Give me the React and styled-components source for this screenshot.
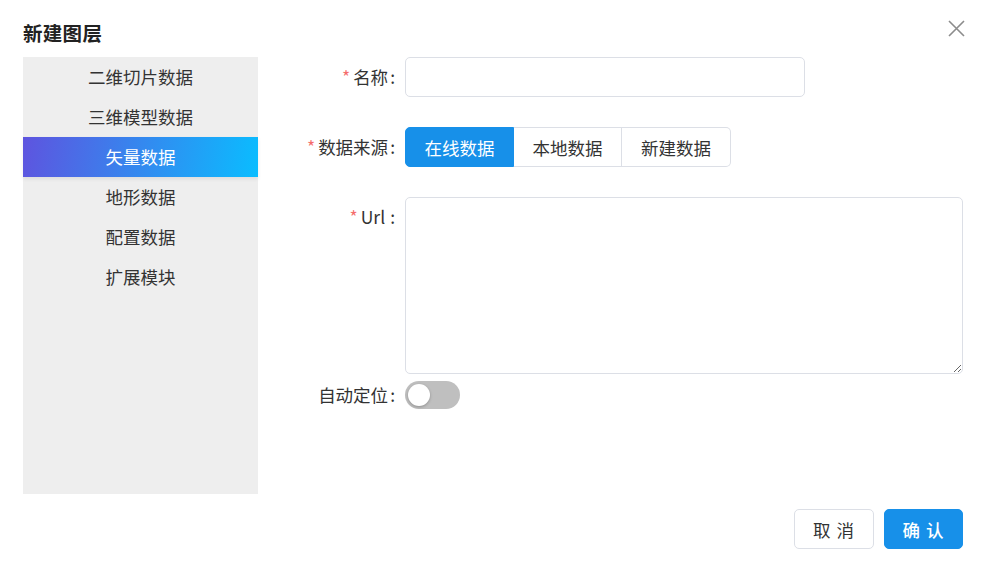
import styled, { createGlobalStyle } from "styled-components";
import { useState } from "react";

const GlobalStyle = createGlobalStyle`
  body {
    margin: 0;
    background: #ffffff;
    font-family: "Noto Sans", "Noto Sans CJK SC", sans-serif;
    color: #333333;
  }
  * {
    box-sizing: border-box;
  }
`;

const Dialog = styled.div`
  width: 984px;
  height: 562px;
  padding: 17px 21px 0 23px;
  background: #ffffff;
`;

const Header = styled.div`
  display: flex;
  justify-content: space-between;
  align-items: flex-start;
  height: 40px;
`;

const Title = styled.h2`
  margin: 0;
  font-size: 19.5px;
  line-height: 32px;
  font-weight: bold;
  color: #222222;
  letter-spacing: 0.3px;
  font-family: "Noto Sans CJK SC", sans-serif;
`;

const CloseButton = styled.button`
  border: none;
  background: none;
  padding: 0;
  margin: 1px -3px 0 0;
  width: 20px;
  height: 20px;
  display: flex;
  align-items: center;
  justify-content: center;
  cursor: pointer;
`;

const Body = styled.div`
  display: flex;
`;

const Sidebar = styled.ul`
  list-style: none;
  margin: 0;
  padding: 0;
  width: 235px;
  height: 437px;
  background: #eeeeee;
  flex-shrink: 0;
`;

const SideItem = styled.li`
  height: 40px;
  line-height: 40px;
  text-align: center;
  font-size: 17.5px;
  font-family: "Noto Sans CJK SC", sans-serif;
  color: ${({ active }) => (active ? "#ffffff" : "#333333")};
  background: ${({ active }) =>
    active ? "linear-gradient(100deg, #5e54df, #0abdff)" : "transparent"};
  box-shadow: ${({ active }) => (active ? "0 2px 4px rgba(0, 0, 0, 0.08)" : "none")};
  cursor: pointer;
`;

const Form = styled.div`
  flex: 1;
  display: flex;
  flex-direction: column;
`;

const Row = styled.div`
  display: flex;
  align-items: ${({ top }) => (top ? "flex-start" : "center")};
  margin-bottom: ${({ gap }) => gap}px;
  min-height: 40px;
`;

const Label = styled.label`
  width: 147px;
  flex-shrink: 0;
  padding-right: 10px;
  text-align: right;
  font-size: 17.5px;
  line-height: 40px;
  color: #333333;
  font-family: "Noto Sans CJK SC", sans-serif;
`;

const Star = styled.span`
  color: #f56c6c;
  margin-right: 3px;
`;

const Colon = styled.span`
  margin-left: ${({ wide }) => (wide ? "5px" : "2px")};
`;

const TextInput = styled.input`
  width: 400px;
  height: 40px;
  border: 1px solid #dcdfe6;
  border-radius: 5px;
  padding: 0 14px;
  font-size: 17.5px;
  outline: none;
`;

const Segmented = styled.div`
  display: flex;
`;

const SegButton = styled.button`
  height: 40px;
  width: ${({ w }) => w}px;
  font-size: 17.5px;
  font-family: "Noto Sans CJK SC", sans-serif;
  border: 1px solid ${({ active }) => (active ? "#1790e9" : "#dcdfe6")};
  border-left-width: ${({ first }) => (first ? "1px" : "0")};
  background: ${({ active }) => (active ? "#1790e9" : "#ffffff")};
  color: ${({ active }) => (active ? "#ffffff" : "#333333")};
  padding: 0;
  cursor: pointer;
  &:first-child {
    border-radius: 5px 0 0 5px;
  }
  &:last-child {
    border-radius: 0 5px 5px 0;
  }
`;

const TextArea = styled.textarea`
  flex: 1;
  height: 177px;
  border: 1px solid #dcdfe6;
  border-radius: 5px;
  padding: 8px 14px;
  font-size: 17.5px;
  resize: vertical;
  outline: none;
`;

const Switch = styled.button`
  width: 55px;
  height: 28px;
  border-radius: 14px;
  border: none;
  padding: 3px;
  background: ${({ on }) => (on ? "#1790e9" : "#bfbfbf")};
  display: flex;
  justify-content: ${({ on }) => (on ? "flex-end" : "flex-start")};
  cursor: pointer;
`;

const Knob = styled.span`
  width: 22px;
  height: 22px;
  border-radius: 50%;
  background: #ffffff;
  box-shadow: 0 1px 3px rgba(0, 0, 0, 0.25);
`;

const Footer = styled.div`
  display: flex;
  justify-content: flex-end;
  gap: 10px;
  margin-top: 15px;
`;

const Button = styled.button`
  width: ${({ w }) => w}px;
  height: 40px;
  border-radius: 5px;
  font-size: 17.5px;
  font-family: "Noto Sans CJK SC", sans-serif;
  letter-spacing: 1px;
  border: 1px solid ${({ primary }) => (primary ? "#1790e9" : "#dcdfe6")};
  background: ${({ primary }) => (primary ? "#1790e9" : "#ffffff")};
  color: ${({ primary }) => (primary ? "#ffffff" : "#333333")};
  font-weight: ${({ primary }) => (primary ? 500 : 400)};
  cursor: pointer;
`;

const MENU = ["二维切片数据", "三维模型数据", "矢量数据", "地形数据", "配置数据", "扩展模块"];
const SOURCES = [
  { name: "在线数据", w: 109 },
  { name: "本地数据", w: 108 },
  { name: "新建数据", w: 109 },
];

const App = () => {
  const [menu, setMenu] = useState(2);
  const [source, setSource] = useState(0);
  const [locate, setLocate] = useState(false);

  return (
    <>
      <GlobalStyle />
      <Dialog>
        <Header>
          <Title>新建图层</Title>
          <CloseButton>
            <svg width="17" height="17" viewBox="0 0 17 17">
              <path d="M1 1L16 16M16 1L1 16" stroke="#8c8c8c" strokeWidth="1.6" fill="none" />
            </svg>
          </CloseButton>
        </Header>
        <Body>
          <Sidebar>
            {MENU.map((item, i) => (
              <SideItem key={item} active={i === menu} onClick={() => setMenu(i)}>
                {item}
              </SideItem>
            ))}
          </Sidebar>
          <Form>
            <Row gap={30}>
              <Label>
                <Star>*</Star>名称<Colon>:</Colon>
              </Label>
              <TextInput />
            </Row>
            <Row gap={30}>
              <Label>
                <Star>*</Star>数据来源<Colon>:</Colon>
              </Label>
              <Segmented>
                {SOURCES.map((s, i) => (
                  <SegButton
                    key={s.name}
                    w={s.w}
                    first={i === 0}
                    active={i === source}
                    onClick={() => setSource(i)}
                  >
                    {s.name}
                  </SegButton>
                ))}
              </Segmented>
            </Row>
            <Row gap={1} top>
              <Label>
                <Star>*</Star>Url<Colon wide>:</Colon>
              </Label>
              <TextArea />
            </Row>
            <Row gap={0}>
              <Label>
                自动定位<Colon>:</Colon>
              </Label>
              <Switch on={locate} onClick={() => setLocate(!locate)}>
                <Knob />
              </Switch>
            </Row>
          </Form>
        </Body>
        <Footer>
          <Button w={80}>取 消</Button>
          <Button w={79} primary>
            确 认
          </Button>
        </Footer>
      </Dialog>
    </>
  );
};

export default App;
